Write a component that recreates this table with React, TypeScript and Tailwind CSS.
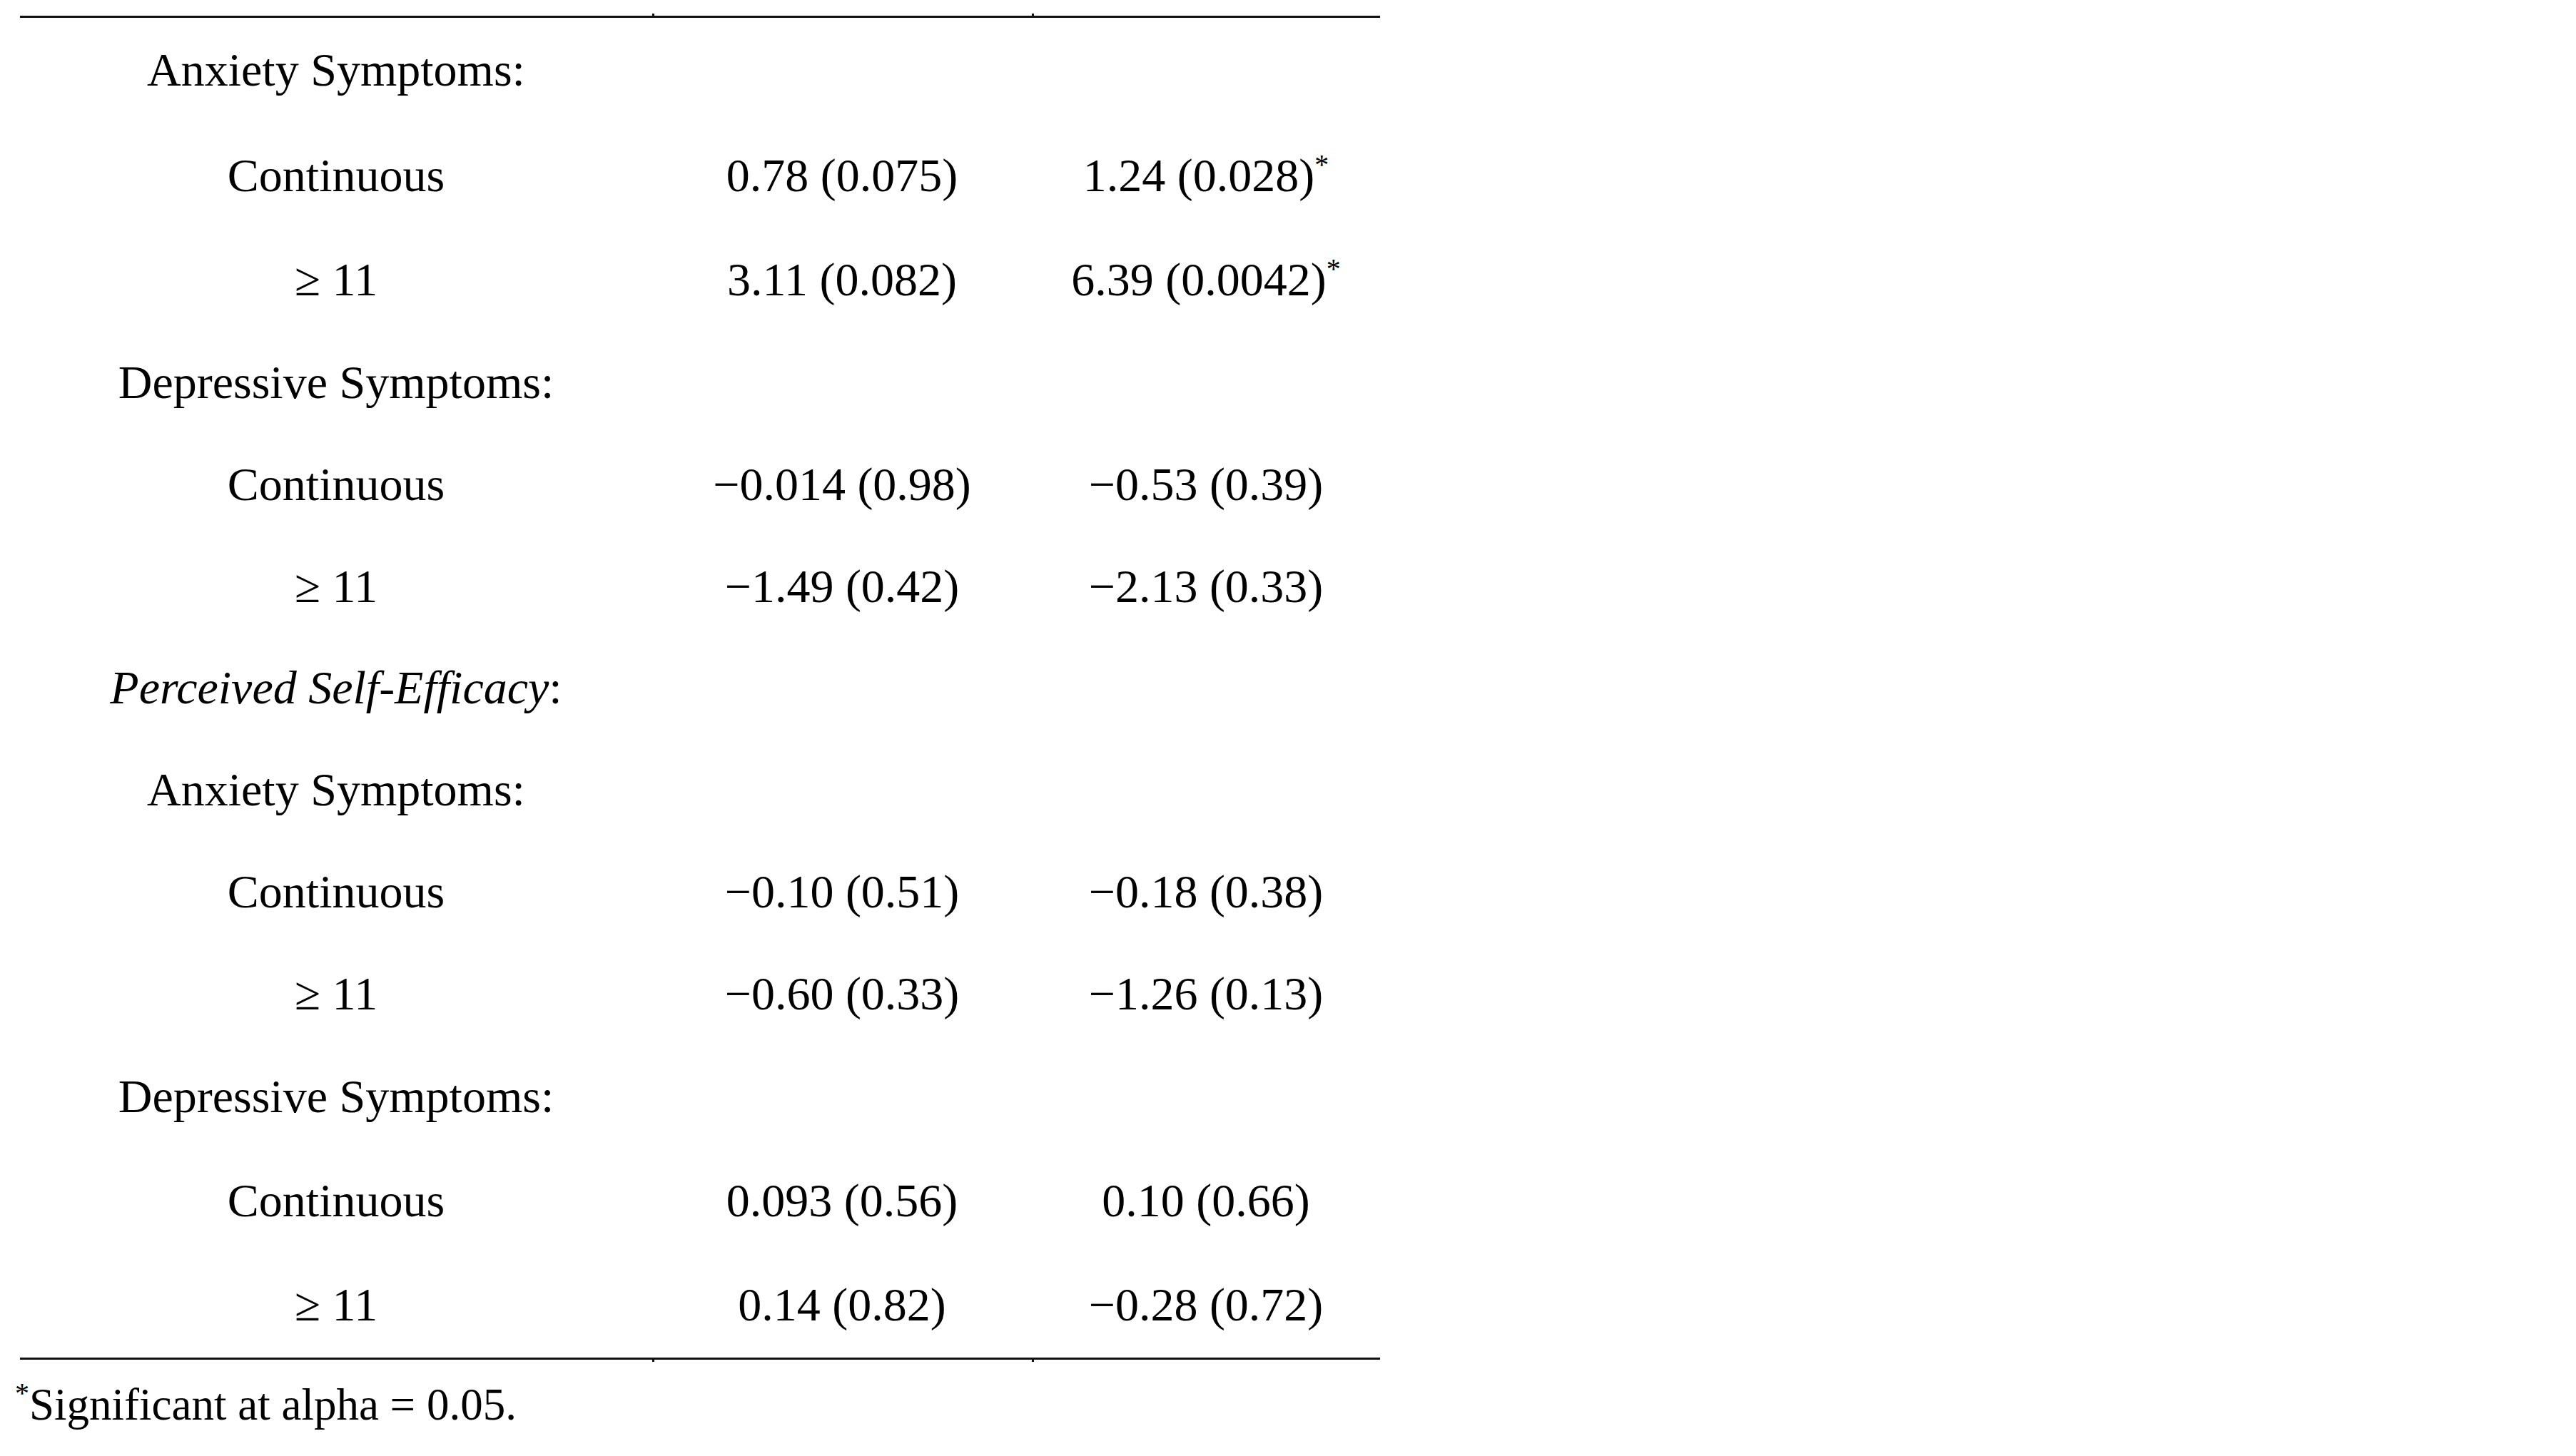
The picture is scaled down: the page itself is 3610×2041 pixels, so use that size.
import React from 'react';

type Row = {
  label: React.ReactNode;
  a?: string;
  b?: string;
  star?: boolean;
  h: string;
};

const ge = <>≥ 11</>;

const rows: Row[] = [
  { label: 'Anxiety Symptoms:', h: 'h-[148px]' },
  { label: 'Continuous', a: '0.78 (0.075)', b: '1.24 (0.028)', star: true, h: 'h-[147px]' },
  { label: ge, a: '3.11 (0.082)', b: '6.39 (0.0042)', star: true, h: 'h-[145px]' },
  { label: 'Depressive Symptoms:', h: 'h-[143px]' },
  { label: 'Continuous', a: '−0.014 (0.98)', b: '−0.53 (0.39)', h: 'h-[143px]' },
  { label: ge, a: '−1.49 (0.42)', b: '−2.13 (0.33)', h: 'h-[143px]' },
  {
    label: (
      <>
        <span className="italic">Perceived Self-Efficacy</span>:
      </>
    ),
    h: 'h-[142px]',
  },
  { label: 'Anxiety Symptoms:', h: 'h-[143px]' },
  { label: 'Continuous', a: '−0.10 (0.51)', b: '−0.18 (0.38)', h: 'h-[143px]' },
  { label: ge, a: '−0.60 (0.33)', b: '−1.26 (0.13)', h: 'h-[143px]' },
  { label: 'Depressive Symptoms:', h: 'h-[145px]' },
  { label: 'Continuous', a: '0.093 (0.56)', b: '0.10 (0.66)', h: 'h-[147px]' },
  { label: ge, a: '0.14 (0.82)', b: '−0.28 (0.72)', h: 'h-[146px]' },
];

function Star() {
  return <sup className="relative -top-[24px] text-[40px] leading-none">*</sup>;
}

function Rule({ top }: { top?: boolean }) {
  // thin rule split at the column edges, with the little tick marks Word leaves behind
  return (
    <div className={`flex h-[6px] ${top ? 'items-end' : 'items-start'}`}>
      <div className="h-[3px] w-[886px] bg-[#111]" />
      <div className="h-[6px] w-[3px] bg-[#111]" />
      <div className="h-[3px] w-[529px] bg-[#111]" />
      <div className="h-[6px] w-[3px] bg-[#111]" />
      <div className="h-[3px] w-[485px] bg-[#111]" />
    </div>
  );
}

export default function App() {
  return (
    <div className="min-h-screen bg-white font-['Liberation_Serif','Times_New_Roman',serif] text-black">
      <div className="ml-[28px] w-[1906px] pt-[19px]">
        <Rule top />
        {rows.map((r, i) => (
          <div
            key={i}
            className={`grid grid-cols-[886px_532px_488px] items-center pb-[2px] text-[66px] leading-none ${r.h}`}
          >
            <div className="text-center whitespace-nowrap">{r.label}</div>
            <div className="text-center whitespace-nowrap">{r.a}</div>
            <div className="text-center whitespace-nowrap">
              {r.b}
              {r.star && <Star />}
            </div>
          </div>
        ))}
        <Rule />
      </div>
      <p className="mt-[24px] pl-[21px] text-[63px] leading-[72px] whitespace-nowrap">
        <Star />
        Significant at alpha = 0.05.
      </p>
    </div>
  );
}
